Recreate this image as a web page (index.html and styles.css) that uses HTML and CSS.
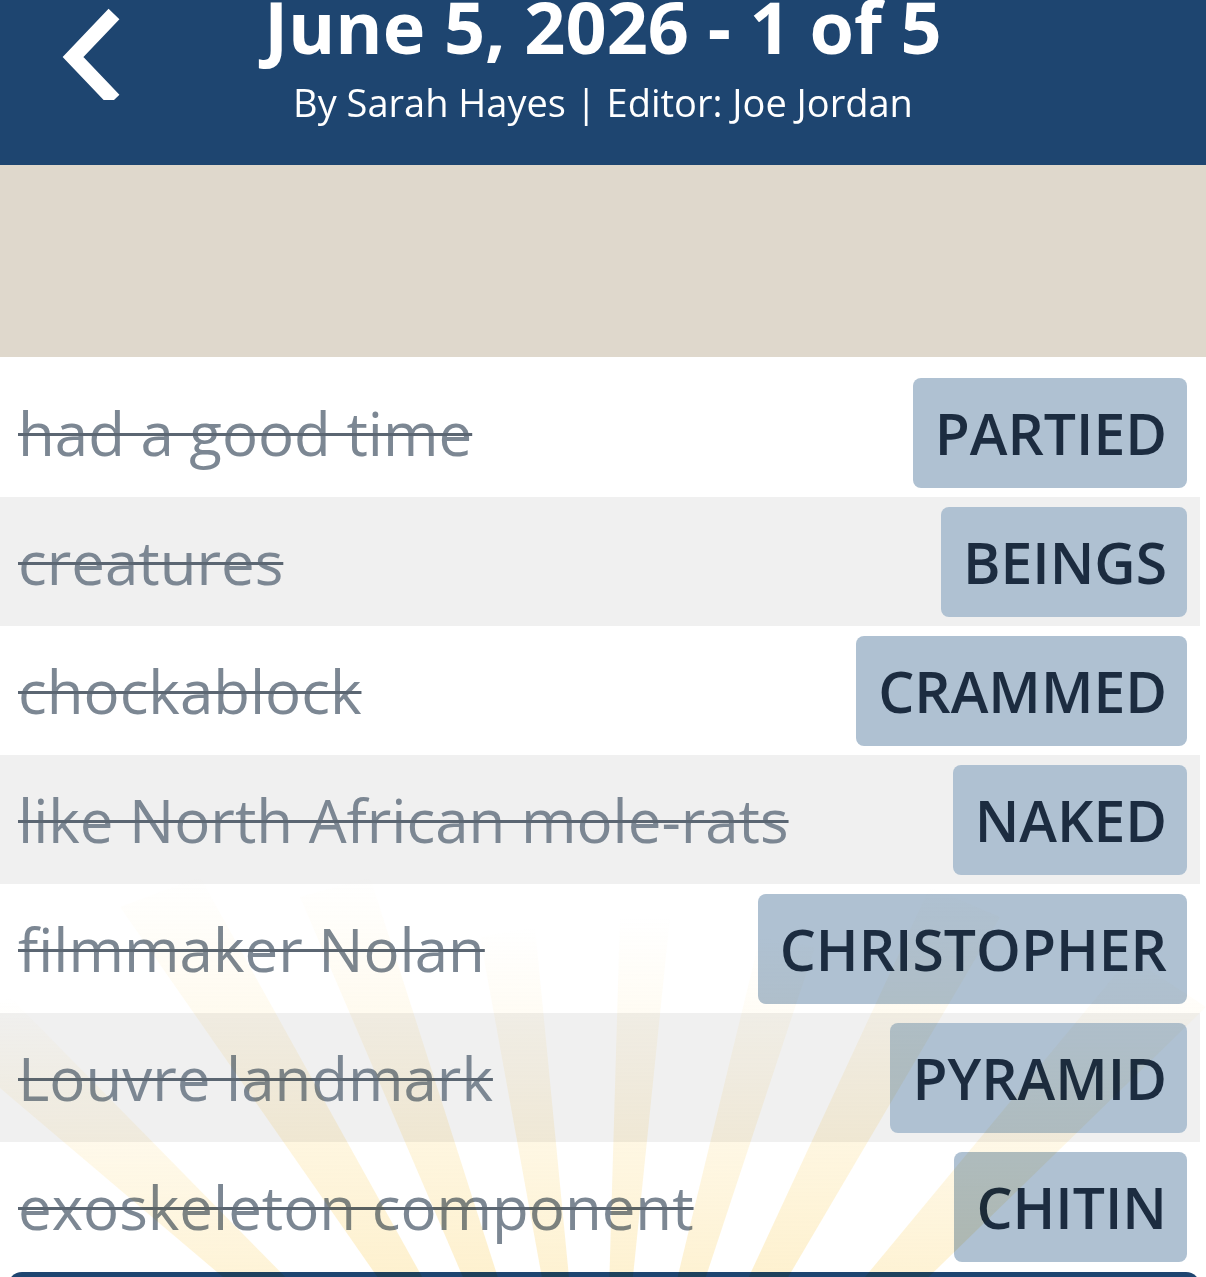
FILE: index.html
```html
<html>
<head>
    <link rel="stylesheet" href="styles.css">
    <title>Puzzle 1 of 5</title>
</head>
<body>

<div class="topbar">
    <div class="back">
        <svg width="70" height="100" viewBox="0 0 70 100">
            <polyline points="56,14 15,57 56,100" fill="none" stroke="#ffffff" stroke-width="15" stroke-linejoin="miter"/>
        </svg>
    </div>
    <div class="heading">
        <h1 class="title">June 5, 2026 - 1 of 5</h1>
        <div class="byline">By Sarah Hayes | Editor: Joe Jordan</div>
    </div>
    <div></div>
</div>

<div class="banner"></div>

<!-- solved clues -->
<div class="clues">
    <div class="clue">
        <span class="clue_text">had a good time</span>
        <span class="answer">PARTIED</span>
    </div>
    <div class="clue">
        <span class="clue_text">creatures</span>
        <span class="answer">BEINGS</span>
    </div>
    <div class="clue">
        <span class="clue_text">chockablock</span>
        <span class="answer">CRAMMED</span>
    </div>
    <div class="clue">
        <span class="clue_text">like North African mole-rats</span>
        <span class="answer">NAKED</span>
    </div>
    <div class="clue">
        <span class="clue_text">filmmaker Nolan</span>
        <span class="answer">CHRISTOPHER</span>
    </div>
    <div class="clue">
        <span class="clue_text">Louvre landmark</span>
        <span class="answer">PYRAMID</span>
    </div>
    <div class="clue">
        <span class="clue_text">exoskeleton component</span>
        <span class="answer">CHITIN</span>
    </div>

    <!-- sunburst glow over the bottom rows -->
    <svg class="rays" width="1206" height="400" viewBox="0 0 1206 400">
        <defs>
            <linearGradient id="fade" x1="0" y1="0" x2="0" y2="1">
                <stop offset="0" stop-color="#fbd777" stop-opacity="0"/>
                <stop offset="0.35" stop-color="#fbd777" stop-opacity="0.22"/>
                <stop offset="1" stop-color="#fbd777" stop-opacity="0.65"/>
            </linearGradient>
        </defs>
        <g fill="url(#fade)">
            <polygon points="600,720 -60,160 10,120"/>
            <polygon points="600,720 120,30 200,0"/>
            <polygon points="600,720 300,20 370,0"/>
            <polygon points="600,720 480,60 535,50"/>
            <polygon points="600,720 620,40 670,40"/>
            <polygon points="600,720 760,60 815,70"/>
            <polygon points="600,720 930,10 1000,40"/>
            <polygon points="600,720 1130,80 1206,130"/>
        </g>
    </svg>
</div>

<div class="footer_button"></div>

</body>
</html>
```

FILE: styles.css
```css
body {
    margin: 0;
    background-color: white;
    font-family: "Open Sans", sans-serif;
    overflow: hidden;
}

.topbar {
    display: grid;
    grid-template-columns: 1fr auto 1fr;
    height: 165px;
    background-color: #1e4570;
    color: white;
}

.back {
    padding-left: 58px;
}

.heading {
    text-align: center;
}

.title {
    margin: -10px 0 0 0;
    font-size: 72px;
    line-height: 1;
    font-weight: 700;
}

.byline {
    margin-top: 18px;
    font-size: 38px;
    line-height: 1.2;
}

.banner {
    height: 192px;
    background-color: #dfd8cc;
}

.clues {
    position: relative;
    width: 1200px;
    padding-top: 11px;
}

.clue {
    display: flex;
    align-items: center;
    justify-content: space-between;
    height: 129px;
    padding: 0 13px 0 18px;
}

.clue:nth-child(even) {
    background-color: #f0f0f0;
}

.clue_text {
    font-size: 60px;
    color: #7c8793;
    text-decoration: line-through;
    text-decoration-color: #5b6672;
    text-decoration-thickness: 3px;
    white-space: nowrap;
}

.answer {
    display: flex;
    align-items: center;
    height: 110px;
    padding: 0 20px 0 22px;
    border-radius: 8px;
    background-color: #afc1d2;
    color: #1c2c40;
    font-size: 57px;
    font-weight: 600;
}

.rays {
    position: absolute;
    left: 0;
    bottom: -6px;
    mix-blend-mode: multiply;
    pointer-events: none;
}

.footer_button {
    height: 60px;
    margin: 1px 6px 0 8px;
    border-radius: 14px;
    background-color: #1e4570;
}
```
